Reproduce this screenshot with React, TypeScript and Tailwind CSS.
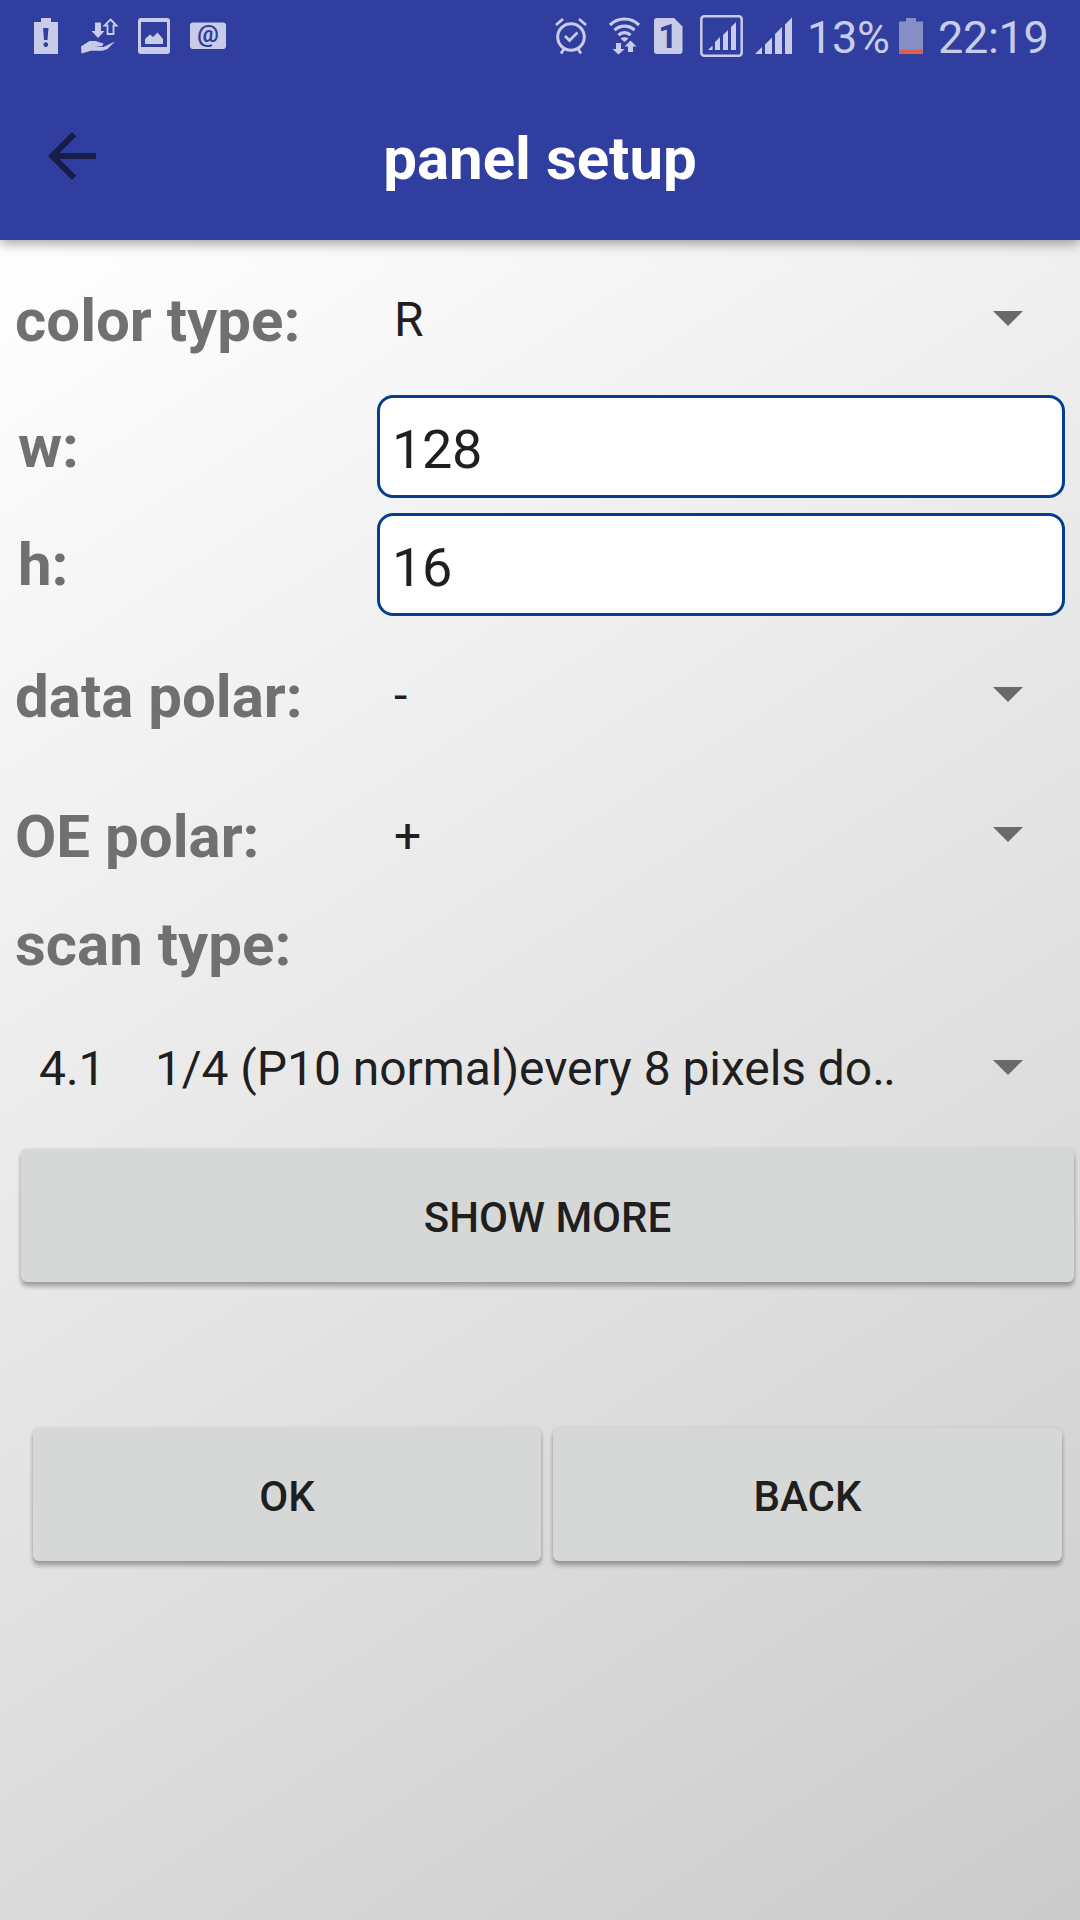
import type { ReactNode } from "react";

const SELECT_ROWS = [
  { label: "data polar:", value: "-" },
  { label: "OE polar:", value: "+" },
];

function StatusBar() {
  return (
    <div className="flex h-[72px] items-center text-[#c9cce8]">
      <svg width="540" height="72" viewBox="0 0 540 72" fill="currentColor">
        {/* battery warning */}
        <path
          fillRule="evenodd"
          d="M41 18h10v4h7v32H34V22h7zM43 28l1 12h3.500l1-12zM45.800 42.200a2.400 2.400 0 1 0 .01 0z"
        />
        {/* hand with transfer arrows */}
        <path d="M95 22.500h6v8.500h3.500L98 38l-6.500-7H95z" />
        <path
          d="M110.500 19.500l6 6h-3v8.500h-6v-8.500h-3z"
          fill="none"
          stroke="currentColor"
          strokeWidth="1.800"
        />
        <path d="M81 46.500l8.500-5.500h6l8 2.500-1 2.500-8 .5 9 .5 11.500-5.500-7.500 7.500-5 1.800H91l-9.500 2.700z" />
        {/* picture */}
        <path
          fillRule="evenodd"
          d="M141 18h26a3 3 0 0 1 3 3v30a3 3 0 0 1-3 3h-26a3 3 0 0 1-3-3V21a3 3 0 0 1 3-3zM141 22v25h26V22z"
        />
        <path d="M145 44v-5l5-4.500 3 2.500 4.500-4.500 5.500 6.500v5z" />
        {/* mail */}
        <rect x="190" y="22.500" width="36" height="26.500" rx="3" />
        <text
          x="208"
          y="42"
          textAnchor="middle"
          fontSize="24"
          fontWeight="700"
          fontFamily="Roboto, sans-serif"
          fill="#303f9f"
        >
          @
        </text>
      </svg>

      <svg width="262" height="72" viewBox="540 0 262 72" fill="none" stroke="currentColor">
        {/* alarm */}
        <circle cx="571" cy="37" r="13.300" strokeWidth="3" />
        <path d="M565 36l4.500 4.500 8-8" strokeWidth="2.800" />
        <path d="M556 25l7-6M586 25l-7-6M564 49l-3 4.500M578 49l3 4.500" strokeWidth="2.800" />
        {/* wifi */}
        <g strokeWidth="3.200">
          <path d="M610 25a20.500 20.500 0 0 1 29 0" />
          <path d="M614.500 30.200a14.500 14.500 0 0 1 20 0" />
          <path d="M618.500 35.200a8.500 8.500 0 0 1 12 0" />
        </g>
        <g fill="currentColor" stroke="none">
          <path d="M620.500 38.500q4-2.500 8 0l-4 3.500z" />
          <path d="M616 43h5v6h3.500l-6 5.500-6-5.500h3.500zM628 52v-5.500h-3.500l6-6 6 6H633V52z" />
          {/* sim slot */}
          <path d="M657 18h17l8.500 8.500V51a3 3 0 0 1-3 3H657a3 3 0 0 1-3-3V21a3 3 0 0 1 3-3z" />
        </g>
        <text
          x="668"
          y="48"
          textAnchor="middle"
          fontSize="34"
          fontWeight="700"
          fontFamily="Roboto, sans-serif"
          fill="#303f9f"
          stroke="none"
        >
          1
        </text>
        {/* signal strength */}
        <rect x="701.300" y="16.300" width="40.400" height="39.400" rx="3" strokeWidth="2.500" />
        <g fill="currentColor" stroke="none">
          <path d="M708 50l4.500-4.500V50zM715 42l5-5v13h-5zM723 35l5-5v20h-5zM731 27l5-5v28h-5z" />
          <path d="M755 54l7-7v7zM765 44.500l7-7V54h-7zM775 34l7-7v27h-7zM785 24.500l7-7V54h-7z" />
        </g>
      </svg>

      <span className="w-[94px] pt-[3px] pl-[5px] text-[45px] leading-[72px] tracking-[-0.3px]">
        13%
      </span>
      <svg width="36" height="72" viewBox="896 0 36 72">
        <path d="M906 18h10v3.500h7V54h-24V21.500h7z" fill="#868ec6" />
        <path d="M899 49.500h24V54h-24z" fill="#d9614c" />
      </svg>
      <span className="pt-[3px] pl-[6px] text-[45px] leading-[72px] tracking-[-0.3px]">22:19</span>
    </div>
  );
}

function AppBar() {
  return (
    <header className="relative bg-[#303f9f] shadow-[0_3px_12px_rgba(0,0,0,0.4)]">
      <StatusBar />
      <div className="grid h-[168px] grid-cols-[144px_1fr_144px] items-center">
        <button type="button" aria-label="Back" className="pl-[48px]">
          <svg width="48" height="48" viewBox="4 4 16 16" fill="#171c49" className="mb-[1px]">
            <path d="M20 11H7.830l5.590-5.590L12 4l-8 8 8 8 1.410-1.410L7.830 13H20v-2z" />
          </svg>
        </button>
        <h1 className="pt-[6px] text-center text-[60px] leading-[70px] font-bold text-white">
          panel setup
        </h1>
      </div>
    </header>
  );
}

function Label({ children }: { children: ReactNode }) {
  return (
    <span className="text-[60px] leading-[70px] font-bold whitespace-nowrap text-[#707070]">
      {children}
    </span>
  );
}

function Caret() {
  return (
    <svg width="30" height="15" viewBox="0 0 30 15" fill="#6a6a6a" className="mb-[2px]">
      <path d="M0 0h30L15 15z" />
    </svg>
  );
}

function SelectRow({ label, value }: { label: string; value: string }) {
  return (
    <div className="flex h-[140px] items-center pr-[57px] pl-[15px]">
      <div className="w-[379px] pt-[4px]">
        <Label>{label}</Label>
      </div>
      <span className="flex-1 pt-[2px] text-[48px] leading-[56px]">{value}</span>
      <Caret />
    </div>
  );
}

function InputRow({ label, value }: { label: string; value: string }) {
  return (
    <div className="flex h-[103px] items-center pr-[15px] pl-[18px]">
      <div className="w-[359px] pt-[1px]">
        <Label>{label}</Label>
      </div>
      <input
        defaultValue={value}
        className="h-[103px] min-w-0 flex-1 rounded-[16px] border-[3px] border-[#043e8c] bg-white pt-[6px] pl-[12px] text-[54px] tracking-[-0.3px] outline-none"
      />
    </div>
  );
}

function PanelButton({ children }: { children: ReactNode }) {
  return (
    <button
      type="button"
      className="h-[133px] w-full rounded-[6px] bg-[#d6d8d7] pt-[3px] text-[42px] font-medium shadow-[0_5px_4px_rgba(0,0,0,0.24),0_1px_4px_rgba(0,0,0,0.16)]"
    >
      {children}
    </button>
  );
}

export default function App() {
  return (
    <div className="flex h-[1920px] w-[1080px] flex-col overflow-hidden font-[Roboto,sans-serif] text-[#1f1f1f]">
      <AppBar />
      <main className="flex-1 bg-[linear-gradient(147.3deg,#ffffff,#cbcbcb)] pt-[9px]">
        <SelectRow label="color type:" value="R" />
        <div className="mt-[6px] flex flex-col gap-[15px]">
          <InputRow label="w:" value="128" />
          <InputRow label="h:" value="16" />
        </div>
        <div className="mt-[9px]">
          {SELECT_ROWS.map((row) => (
            <SelectRow key={row.label} label={row.label} value={row.value} />
          ))}
        </div>
        <div className="mt-[5px] pl-[15px]">
          <Label>scan type:</Label>
        </div>
        <div className="mt-[18px] flex h-[140px] items-center pr-[57px] pl-[39px]">
          <span className="flex-1 pt-[2px] text-[48px] leading-[56px] tracking-[-0.05px] whitespace-pre">
            4.1<span className="pl-[2px]">{"    "}</span>1/4 (P10 normal)every 8 pixels do
            <span className="tracking-[-1.7px]">..</span>
          </span>
          <Caret />
        </div>
        <div className="mt-[11px] pr-[6px] pl-[21px]">
          <PanelButton>SHOW MORE</PanelButton>
        </div>
        <div className="mt-[146px] grid grid-cols-[508px_509px] gap-[12px] pl-[33px]">
          <PanelButton>OK</PanelButton>
          <PanelButton>BACK</PanelButton>
        </div>
      </main>
    </div>
  );
}
